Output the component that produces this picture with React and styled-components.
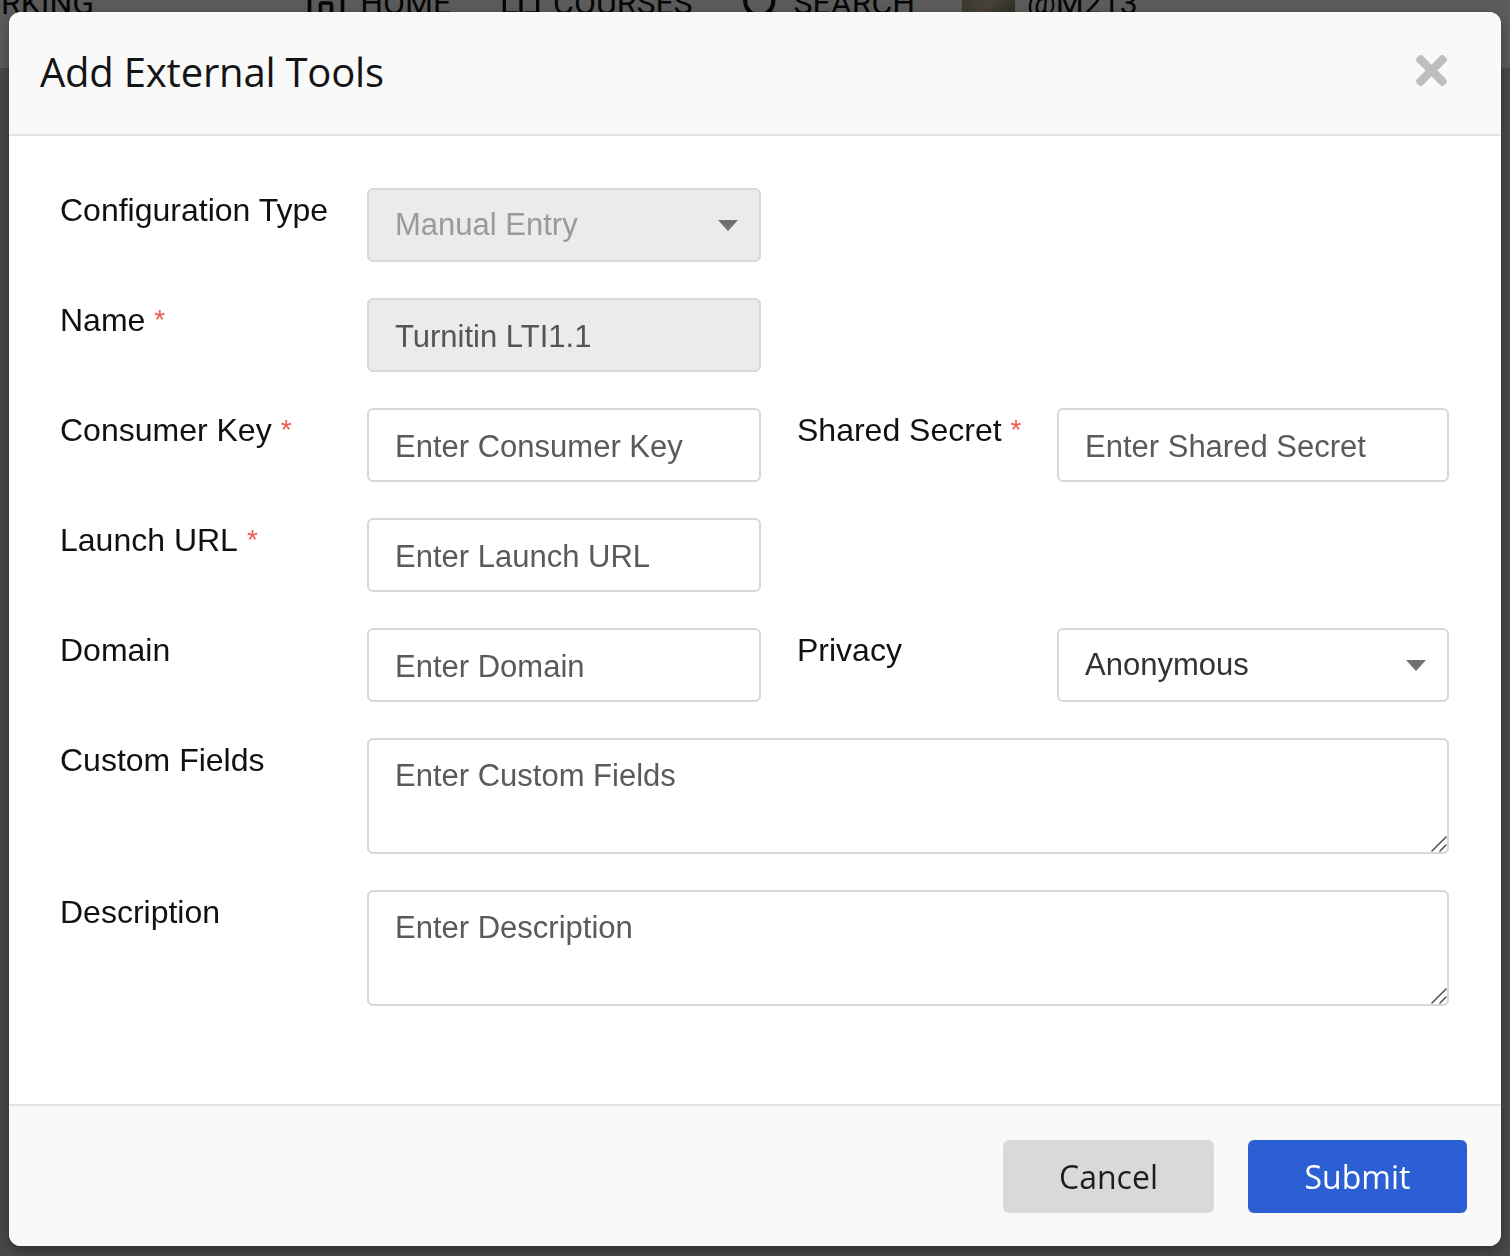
import styled, { createGlobalStyle } from "styled-components";
import { FaTimes } from "react-icons/fa";
import { Home, BookOpen, Search } from "lucide-react";

const GlobalStyle = createGlobalStyle`
  html, body {
    margin: 0;
    padding: 0;
  }

  body {
    font-family: "Liberation Sans", Arial, sans-serif;
    background: #c8c8c8;
    overflow: hidden;
  }

  * {
    box-sizing: border-box;
  }
`;

const fields = [
  { label: "Configuration Type", kind: "select", value: "Manual Entry", disabled: true },
  { label: "Name", required: true, kind: "input", value: "Turnitin LTI1.1", disabled: true },
  { label: "Consumer Key", required: true, kind: "input", placeholder: "Enter Consumer Key" },
  { label: "Shared Secret", required: true, kind: "input", placeholder: "Enter Shared Secret", second: true },
  { label: "Launch URL", required: true, kind: "input", placeholder: "Enter Launch URL" },
  { label: "Domain", kind: "input", placeholder: "Enter Domain" },
  { label: "Privacy", kind: "select", value: "Anonymous", second: true },
  { label: "Custom Fields", kind: "textarea", placeholder: "Enter Custom Fields" },
  { label: "Description", kind: "textarea", placeholder: "Enter Description" },
];

export default function App() {
  return (
    <>
      <GlobalStyle />
      <Page>
        <TopBar>
          <NavRow>
            <Brand>RKING</Brand>
            <NavItem $left={210}>
              <Home size={44} strokeWidth={2} />
              HOME
            </NavItem>
            <NavItem $left={50}>
              <BookOpen size={40} strokeWidth={2} />
              COURSES
            </NavItem>
            <NavItem $left={47}>
              <Search size={42} strokeWidth={2.4} />
              SEARCH
            </NavItem>
            <NavItem $left={47}>
              <Avatar />
              @M213
            </NavItem>
          </NavRow>
        </TopBar>
      </Page>

      <Backdrop>
        <Modal>
          <Header>
            <Title>Add External Tools</Title>
            <CloseButton aria-label="Close">
              <FaTimes size={45} />
            </CloseButton>
          </Header>

          <Body>
            {fields.map((f) => (
              <Field key={f.label} f={f} />
            ))}
          </Body>

          <Footer>
            <Button>Cancel</Button>
            <Button $primary>Submit</Button>
          </Footer>
        </Modal>
      </Backdrop>
    </>
  );
}

function Field({ f }) {
  return (
    <>
      <Label $second={f.second}>
        {f.label}
        {f.required && <Star>*</Star>}
      </Label>
      {f.kind === "select" && (
        <SelectBox $disabled={f.disabled}>
          <span>{f.value}</span>
          <svg width="20" height="11" viewBox="0 0 20 11">
            <path d="M0 0 L20 0 L10 11 Z" fill="#707070" />
          </svg>
        </SelectBox>
      )}
      {f.kind === "input" && (
        <Input
          disabled={f.disabled}
          defaultValue={f.value}
          placeholder={f.placeholder}
        />
      )}
      {f.kind === "textarea" && (
        <TextAreaWrap>
          <TextArea placeholder={f.placeholder} />
          <Grip width="16" height="16" viewBox="0 0 16 16">
            <path
              d="M1 15 L15 1 M9 15 L15 9"
              stroke="#555"
              strokeWidth="1.6"
              strokeLinecap="round"
            />
          </Grip>
        </TextAreaWrap>
      )}
    </>
  );
}

const Page = styled.div`
  min-height: 100vh;
  background: #c8c8c8;
`;

const TopBar = styled.div`
  height: 68px;
  background: #fdfdfd;
  overflow: hidden;
`;

const NavRow = styled.div`
  display: flex;
  align-items: center;
  height: 40px;
  margin-top: -17px;
  font-family: Roboto, "Liberation Sans", sans-serif;
  font-size: 32px;
  line-height: 40px;
  color: #111;
`;

const Brand = styled.div`
  padding-left: 1px;
`;

const NavItem = styled.div`
  display: flex;
  align-items: center;
  gap: 12px;
  margin-left: ${(p) => p.$left}px;
`;

const Avatar = styled.div`
  width: 53px;
  height: 53px;
  border-radius: 4px;
  background: linear-gradient(135deg, #6f8a5c, #c9b59a 50%, #4f6b3e);
`;

const Backdrop = styled.div`
  position: fixed;
  inset: 0;
  background: rgba(0, 0, 0, 0.64);
  display: flex;
  padding: 12px 9px 10px;
`;

const Modal = styled.div`
  flex: 1;
  display: flex;
  flex-direction: column;
  background: #fff;
  border-radius: 12px;
  overflow: hidden;
  box-shadow: 0 5px 14px rgba(0, 0, 0, 0.35);
`;

const Header = styled.div`
  height: 124px;
  flex-shrink: 0;
  display: flex;
  align-items: center;
  justify-content: space-between;
  padding: 0 47px 4px 31px;
  background: #f9f9f9;
  border-bottom: 2px solid #e4e4e4;
`;

const Title = styled.h2`
  margin: 0;
  font-family: "Open Sans", "Noto Sans", sans-serif;
  font-size: 40px;
  font-weight: 400;
  color: #141414;
  letter-spacing: -0.2px;
`;

const CloseButton = styled.button`
  display: flex;
  padding: 0;
  margin-bottom: 2px;
  border: none;
  background: none;
  color: #bebebe;
  cursor: pointer;
`;

const Body = styled.div`
  flex: 1;
  display: grid;
  grid-template-columns: 307px 394px 296px 1fr;
  row-gap: 36px;
  align-content: start;
  align-items: start;
  padding: 52px 52px 0 51px;
`;

const Label = styled.div`
  grid-column: ${(p) => (p.$second ? 3 : 1)};
  padding-top: 2px;
  padding-left: ${(p) => (p.$second ? "36px" : "0")};
  font-size: 32px;
  line-height: 40px;
  color: #111;
  white-space: nowrap;
`;

const Star = styled.span`
  margin-left: 9px;
  font-size: 28px;
  line-height: 40px;
  color: #ec5a4f;
  vertical-align: top;
`;

const boxStyles = `
  height: 74px;
  width: 100%;
  border: 2px solid #d8d8d8;
  border-radius: 6px;
  padding: 0 21px 0 26px;
  font-family: "Liberation Sans", Arial, sans-serif;
  font-size: 31px;
`;

const Input = styled.input`
  ${boxStyles}
  padding-top: 3px;
  background: #fff;
  color: #333;
  outline: none;

  &::placeholder {
    color: #5a5a5a;
    opacity: 1;
  }

  &:disabled {
    background: #ebebeb;
    color: #555;
    -webkit-text-fill-color: #555;
    opacity: 1;
  }
`;

const SelectBox = styled.div`
  ${boxStyles}
  display: flex;
  align-items: center;
  justify-content: space-between;
  background: ${(p) => (p.$disabled ? "#ebebeb" : "#fff")};
  color: ${(p) => (p.$disabled ? "#9a9a9a" : "#333")};
`;

const TextAreaWrap = styled.div`
  grid-column: 2 / -1;
  position: relative;
  display: flex;
`;

const TextArea = styled.textarea`
  ${boxStyles}
  height: 116px;
  padding-top: 18px;
  padding-bottom: 10px;
  background: #fff;
  color: #333;
  outline: none;
  resize: none;
  line-height: 1.15;

  &::placeholder {
    color: #5a5a5a;
    opacity: 1;
  }
`;

const Grip = styled.svg`
  position: absolute;
  right: 2px;
  bottom: 2px;
  pointer-events: none;
`;

const Footer = styled.div`
  height: 142px;
  flex-shrink: 0;
  display: flex;
  align-items: center;
  justify-content: flex-end;
  gap: 34px;
  padding: 0 34px;
  background: #f9f9f9;
  border-top: 2px solid #e2e2e2;
`;

const Button = styled.button`
  height: 73px;
  width: ${(p) => (p.$primary ? "219px" : "211px")};
  border: none;
  border-radius: 6px;
  background: ${(p) => (p.$primary ? "#2b5fd3" : "#d9d9d9")};
  color: ${(p) => (p.$primary ? "#fff" : "#1e1e1e")};
  font-family: "Open Sans", "Noto Sans", sans-serif;
  font-size: 32px;
  cursor: pointer;
`;
